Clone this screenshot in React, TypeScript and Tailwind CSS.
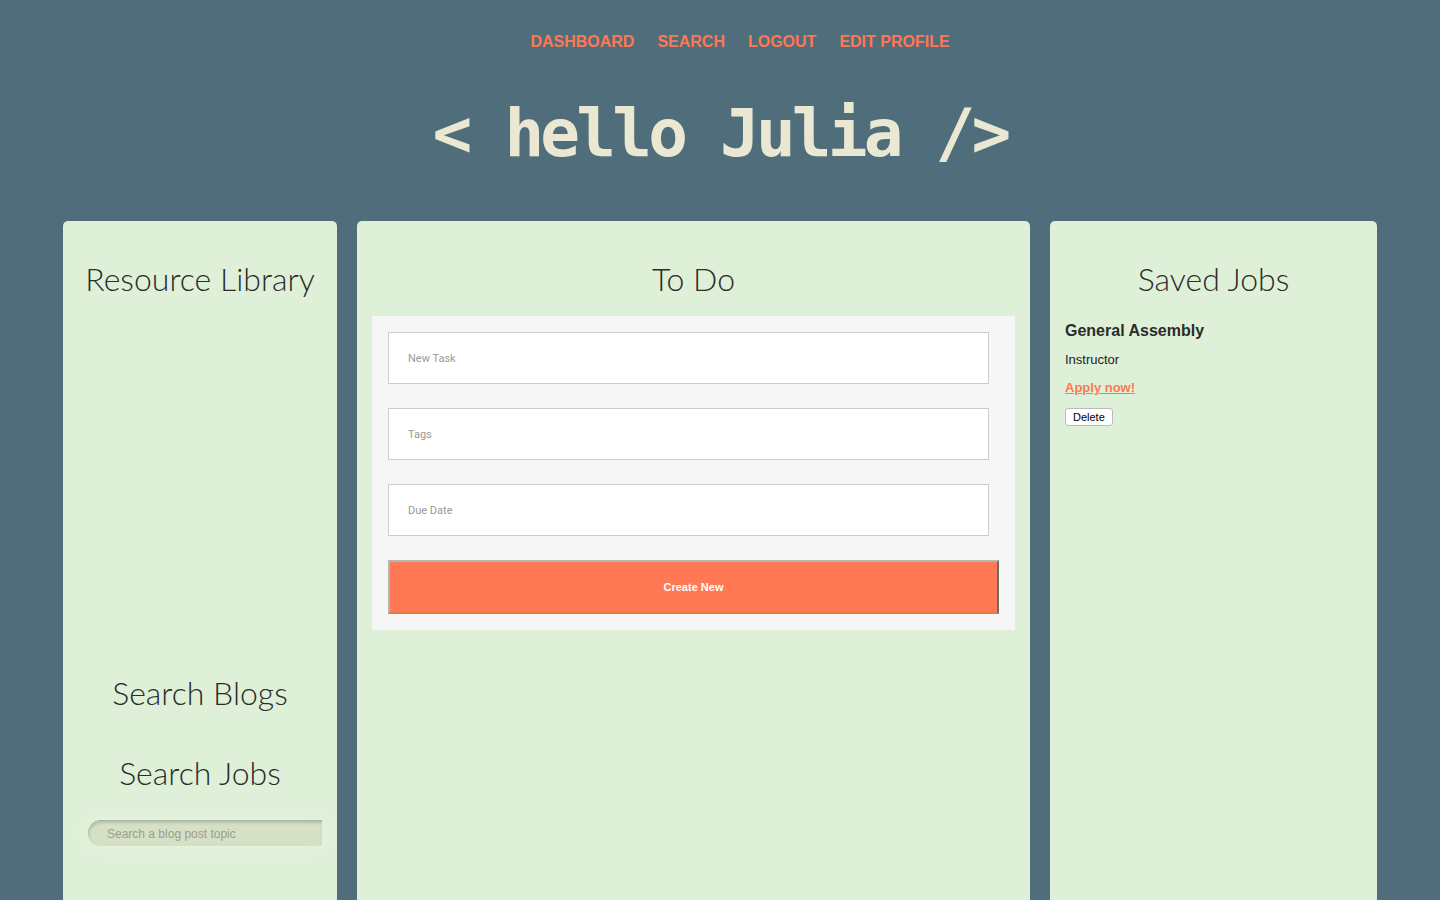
import React from "react";

const navItems = ["DASHBOARD", "SEARCH", "LOGOUT", "EDIT PROFILE"];

function PanelHeading({ children, className = "" }: { children: React.ReactNode; className?: string }) {
  return (
    <h2 className={`whitespace-nowrap text-center text-[32px] font-light leading-[40px] text-[#2b2b2b] font-['Lato',sans-serif] ${className}`}>
      {children}
    </h2>
  );
}

function TodoInput({ placeholder }: { placeholder: string }) {
  return (
    <input
      placeholder={placeholder}
      className="h-[52px] w-[601px] border border-[#cccccc] bg-white px-[19px] text-[11px] text-[#555] placeholder:text-[#999] outline-none font-['Roboto',sans-serif]"
    />
  );
}

export default function App() {
  return (
    <div className="h-[900px] overflow-hidden bg-[#4f6d7a] font-['Liberation_Sans',Arial,sans-serif]">
      <nav className="flex justify-center gap-[23px] pl-[40px] pt-[32px]">
        {navItems.map(item => (
          <a key={item} href="#" className="text-[16px] font-bold leading-[20px] text-[#ff7752]">
            {item}
          </a>
        ))}
      </nav>

      <h1 className="mt-[42px] text-center text-[66px] font-bold leading-[80px] tracking-[-3.8px] text-[#eae8d3] font-['DejaVu_Sans_Mono',monospace]">
        {"< hello Julia />"}
      </h1>

      <div className="mt-[47px] flex justify-center gap-[20px]">
        {/* left column */}
        <section className="flex h-[700px] w-[274px] flex-col rounded-t-[5px] bg-[#dff0d8] px-[15px] pt-[38px]">
          <PanelHeading>Resource Library</PanelHeading>
          <PanelHeading className="mt-[374px]">Search Blogs</PanelHeading>
          <PanelHeading className="mt-[40px]">Search Jobs</PanelHeading>
          <input
            placeholder="Search a blog post topic"
            className="ml-[10px] mt-[27px] h-[26px] w-[234px] rounded-l-full border-t border-[#a8b59a] bg-[#d5e0c4] px-[19px] text-[12px] text-[#555] placeholder:text-[#9a9f92] shadow-[inset_1px_2px_3px_rgba(0,0,0,0.15),0_0_18px_rgba(255,255,255,0.35)] outline-none"
          />
        </section>

        {/* middle column */}
        <section className="flex h-[700px] w-[673px] flex-col rounded-t-[5px] bg-[#dff0d8] px-[15px] pt-[38px]">
          <PanelHeading>To Do</PanelHeading>
          <form className="mt-[17px] flex flex-col gap-[24px] bg-[#f6f6f6] p-[16px]" onSubmit={e => e.preventDefault()}>
            <TodoInput placeholder="New Task" />
            <TodoInput placeholder="Tags" />
            <TodoInput placeholder="Due Date" />
            <button
              type="submit"
              className="h-[54px] w-[611px] border-2 border-t-[#b5b5b5] border-l-[#b5b5b5] border-r-[#6b6b6b] border-b-[#e97a3f] bg-[#ff7955] text-[11px] font-bold text-white"
            >
              Create New
            </button>
          </form>
        </section>

        {/* right column */}
        <section className="flex h-[700px] w-[327px] flex-col rounded-t-[5px] bg-[#dff0d8] px-[15px] pt-[38px]">
          <PanelHeading>Saved Jobs</PanelHeading>
          <h3 className="mt-[22px] text-[16px] font-bold leading-[20px] text-[#2b2b2b]">General Assembly</h3>
          <p className="mt-[11px] text-[13px] leading-[16px] text-[#222]">Instructor</p>
          <a href="#" className="mt-[12px] text-[13px] font-bold leading-[16px] text-[#ff7752] underline">
            Apply now!
          </a>
          <div className="mt-[8px]">
            <button className="h-[18px] rounded-[3px] border border-[#bbb] bg-white px-[7px] text-[11px] leading-[14px] text-black">
              Delete
            </button>
          </div>
        </section>
      </div>
    </div>
  );
}
